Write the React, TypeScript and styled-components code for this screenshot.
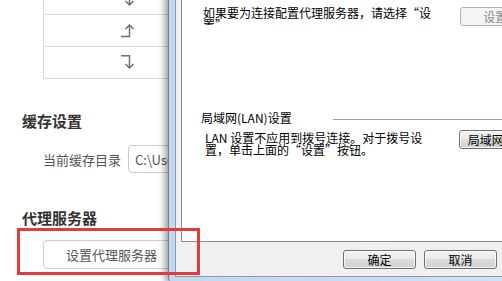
import React from "react";
import styled, { createGlobalStyle } from "styled-components";

const GlobalStyle = createGlobalStyle`
  html, body {
    margin: 0;
    padding: 0;
    background: #fff;
  }
  body {
    font-family: "Noto Sans CJK SC", "Noto Sans", sans-serif;
  }
`;

const Screen = styled.div`
  position: relative;
  width: 502px;
  height: 281px;
  overflow: hidden;
  background: #fff;
`;

/* settings page behind the dialog (scrolled a little) */
const Page = styled.div`
  display: flex;
  flex-direction: column;
  align-items: flex-start;
  padding-left: 22px;
  margin-top: -18px;
  font-family: "Noto Sans CJK SC", sans-serif;
`;

const Table = styled.div`
  margin-left: 21px;
  width: 420px;
  border-left: 1px solid #dcdcdc;
  border-bottom: 1px solid #dcdcdc;
`;

const TableRow = styled.div`
  height: 32px;
  box-sizing: border-box;
  border-top: 1px solid #dcdcdc;
  display: flex;
  align-items: center;
  padding-left: 76px;
`;

const SectionTitle = styled.div<{ $gap: number }>`
  margin-top: ${(p) => p.$gap}px;
  font-size: 15px;
  line-height: 15px;
  font-weight: bold;
  color: #333;
`;

const FieldRow = styled.div`
  margin: 17px 0 0 21px;
  display: flex;
  align-items: center;
  gap: 7px;
`;

const FieldLabel = styled.span`
  font-size: 13px;
  line-height: 13px;
  color: #555;
`;

const PathInput = styled.input`
  width: 300px;
  height: 28px;
  box-sizing: border-box;
  border: 1px solid #ccc;
  border-radius: 4px;
  padding: 0 6px;
  font: 13px "Noto Sans CJK SC", sans-serif;
  color: #555;
  background: #fff;
  outline: none;
`;

const PageButton = styled.button`
  margin: 15px 0 0 21px;
  width: 137px;
  height: 29px;
  box-sizing: border-box;
  border: 1px solid #ccc;
  border-radius: 4px;
  background: #fff;
  font: 13px "Noto Sans CJK SC", sans-serif;
  color: #555;
  padding: 0;
`;

const ArrowIcon = ({ kind }: { kind: "down" | "cornerUp" | "cornerDown" }) => (
  <svg width="16" height="16" viewBox="0 0 16 16" fill="none" stroke="#6f6f6f" strokeWidth="1.5">
    {kind === "down" && (
      <>
        <path d="M9.5 1V14" />
        <path d="M5.5 10L9.5 14L13.5 10" />
      </>
    )}
    {kind === "cornerUp" && (
      <>
        <path d="M1 13.5H9.5V2" />
        <path d="M5.5 6L9.5 2L13.5 6" />
      </>
    )}
    {kind === "cornerDown" && (
      <>
        <path d="M1 0.8H9.5V13" />
        <path d="M5.5 9L9.5 13L13.5 9" />
      </>
    )}
  </svg>
);

/* Windows 7 style dialog on top */
const Window = styled.div`
  position: absolute;
  left: 168px;
  top: -30px;
  bottom: -3px;
  width: 423px;
  box-sizing: border-box;
  display: flex;
  border: 1px solid #6f7f94;
  border-radius: 0 0 6px 6px;
  padding: 0 6px 6px;
  background: linear-gradient(90deg, #c3d7ef, #d3e3f6);
  box-shadow: -3px 0 7px rgba(0, 0, 0, 0.4);
  font-family: "Noto Sans CJK SC", sans-serif;
  font-size: 12px;
  color: #000;
`;

const DialogBody = styled.div`
  flex: 1;
  display: flex;
  flex-direction: column;
  border: 1px solid #8a9bb0;
  background: #f0f0f0;
  padding: 0 5px;
`;

const TabPage = styled.div`
  flex: 1;
  background: #fff;
  border: 1px solid #898c95;
  padding: 34px 0 0 19px;
  display: flex;
  flex-direction: column;
`;

const TabRow = styled.div<{ $gap: number }>`
  margin-top: ${(p) => p.$gap}px;
  display: flex;
  align-items: flex-start;
`;

const StaticText = styled.div<{ $width: number; $indent: number; $top: number; $clip?: number }>`
  flex: 0 0 ${(p) => p.$width}px;
  margin-left: ${(p) => p.$indent}px;
  margin-top: ${(p) => p.$top}px;
  line-height: 12px;
  white-space: nowrap;
  overflow: hidden;
  ${(p) => (p.$clip ? `height: ${p.$clip}px;` : "")}
`;

const GroupLabel = styled.div`
  flex: 0 0 132px;
  line-height: 12px;
  white-space: nowrap;
`;

const Etch = styled.div`
  flex: 1;
  margin-top: 7px;
  border-top: 1px solid #a0a0a0;
  border-bottom: 1px solid #fff;
`;

const WinButton = styled.button<{ $width: number }>`
  flex: 0 0 auto;
  width: ${(p) => p.$width}px;
  height: 19px;
  box-sizing: border-box;
  border: 1px solid #707070;
  border-radius: 3px;
  background: linear-gradient(#f2f2f2 0%, #ebebeb 49%, #dddddd 50%, #cfcfcf 100%);
  box-shadow: inset 0 0 0 1px rgba(255, 255, 255, 0.75);
  font: 12px "Noto Sans CJK SC", sans-serif;
  line-height: 16px;
  color: #000;
  padding: 0;
  white-space: nowrap;
  overflow: hidden;

  &:disabled {
    border-color: #adb2b5;
    background: #f4f4f4;
    box-shadow: none;
    color: #8a8a8a;
  }
`;

const Footer = styled.div`
  height: 34px;
  box-sizing: border-box;
  padding-top: 8px;
  display: flex;
  align-items: flex-start;
  justify-content: flex-end;
  gap: 8px;
`;

const Highlight = styled.div`
  position: absolute;
  left: 17px;
  top: 228px;
  width: 183px;
  height: 47px;
  box-sizing: border-box;
  border: 3px solid #e33b3b;
  pointer-events: none;
`;

export default function App() {
  return (
    <Screen>
      <GlobalStyle />
      <Page>
        <Table>
          <TableRow>
            <ArrowIcon kind="down" />
          </TableRow>
          <TableRow>
            <ArrowIcon kind="cornerUp" />
          </TableRow>
          <TableRow>
            <ArrowIcon kind="cornerDown" />
          </TableRow>
        </Table>

        <SectionTitle $gap={34}>缓存设置</SectionTitle>
        <FieldRow>
          <FieldLabel>当前缓存目录</FieldLabel>
          <PathInput readOnly value="C:\Users\Administrator\AppData\Local" />
        </FieldRow>

        <SectionTitle $gap={37}>代理服务器</SectionTitle>
        <PageButton>设置代理服务器</PageButton>
      </Page>

      <Window>
        <DialogBody>
          <TabPage>
            <TabRow $gap={0}>
              <StaticText $width={257} $indent={2} $top={0} $clip={18}>
                如果要为连接配置代理服务器，请选择“设
                <br />
                置”。
              </StaticText>
              <WinButton $width={86} disabled>
                设置(S)
              </WinButton>
            </TabRow>

            <TabRow $gap={86}>
              <GroupLabel>局域网(LAN)设置</GroupLabel>
              <Etch />
            </TabRow>

            <TabRow $gap={6}>
              <StaticText $width={254} $indent={4} $top={2}>
                LAN 设置不应用到拨号连接。对于拨号设
                <br />
                置，单击上面的“设置”按钮。
              </StaticText>
              <WinButton $width={92}>局域网设置(L)</WinButton>
            </TabRow>
          </TabPage>

          <Footer>
            <WinButton $width={73}>确定</WinButton>
            <WinButton $width={73}>取消</WinButton>
            <WinButton $width={73}>应用(A)</WinButton>
          </Footer>
        </DialogBody>
      </Window>

      <Highlight />
    </Screen>
  );
}
